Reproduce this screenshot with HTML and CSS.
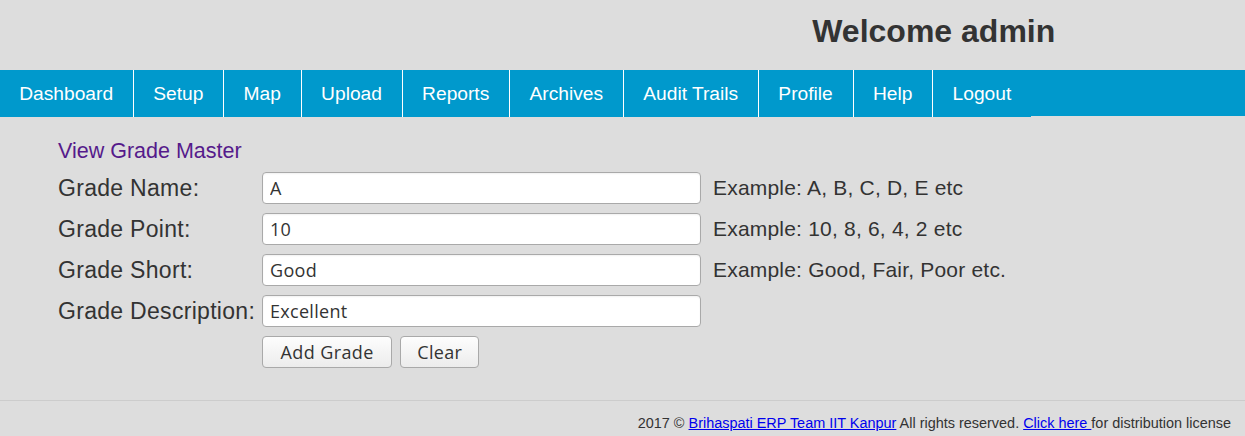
FILE: index.html
```html
<!DOCTYPE html>
<html lang="en">
<head>
<meta charset="utf-8">
<title>View Grade Master</title>
<link rel="stylesheet" href="styles.css">
</head>
<body>
<header class="top">
  <div class="top-left"></div>
  <h1 class="welcome">Welcome admin</h1>
</header>
<nav class="menu">
  <ul class="menu-list">
    <li><a href="#">Dashboard</a></li>
    <li><a href="#">Setup</a></li>
    <li><a href="#">Map</a></li>
    <li><a href="#">Upload</a></li>
    <li><a href="#">Reports</a></li>
    <li><a href="#">Archives</a></li>
    <li><a href="#">Audit Trails</a></li>
    <li><a href="#">Profile</a></li>
    <li><a href="#">Help</a></li>
    <li class="last"><a href="#">Logout</a></li>
  </ul>
</nav>
<main class="content">
  <a class="page-title" href="#">View Grade Master</a>
  <form class="grade-form">
    <label class="field-label">Grade Name:</label>
    <input class="field-input" type="text" value="A">
    <span class="hint">Example: A, B, C, D, E etc</span>

    <label class="field-label">Grade Point:</label>
    <input class="field-input" type="text" value="10">
    <span class="hint">Example: 10, 8, 6, 4, 2 etc</span>

    <label class="field-label">Grade Short:</label>
    <input class="field-input" type="text" value="Good">
    <span class="hint">Example: Good, Fair, Poor etc.</span>

    <label class="field-label">Grade Description:</label>
    <input class="field-input" type="text" value="Excellent">
    <span class="hint"></span>

    <span class="spacer"></span>
    <div class="actions">
      <button class="btn btn-add" type="button">Add Grade</button>
      <button class="btn btn-clear" type="button">Clear</button>
    </div>
  </form>
</main>
<footer class="footer">
  2017 &copy; <a href="#">Brihaspati ERP Team IIT Kanpur</a> All rights reserved. <a href="#">Click here </a>for distribution license
</footer>
</body>
</html>
```

FILE: styles.css
```css
* {
  box-sizing: border-box;
}

html, body {
  margin: 0;
  padding: 0;
  background: #dddddd;
}

body {
  font-family: "Liberation Sans", Arial, sans-serif;
  color: #333333;
}

.top {
  display: grid;
  grid-template-columns: 1fr 1fr;
  height: 70px;
}

.welcome {
  margin: 0;
  padding-top: 13px;
  font-size: 32px;
  font-weight: bold;
  text-align: center;
  color: #333333;
  line-height: normal;
}

.menu {
  background: #0099cc;
  height: 46px;
}

.menu-list {
  list-style: none;
  margin: 0;
  padding: 0;
  display: flex;
}

.menu-list li {
  height: 47px;
  background: #0099cc;
  border-right: 1px solid #ffffff;
}

.menu-list li.last {
  border-right: none;
}

.menu-list a {
  display: block;
  padding: 0 20px 0 19.2px;
  line-height: 47px;
  font-size: 19.2px;
  color: #ffffff;
  text-decoration: none;
}

.content {
  padding: 24px 0 32px 58px;
}

.page-title {
  display: block;
  font-size: 21.5px;
  line-height: 22px;
  color: #551a8b;
  text-decoration: none;
  margin-bottom: 10px;
}

.grade-form {
  display: grid;
  grid-template-columns: 192px 439px auto;
  grid-auto-rows: 32px;
  column-gap: 12px;
  row-gap: 9px;
  align-items: center;
}

.field-label {
  font-size: 23px;
  letter-spacing: 0.3px;
  white-space: nowrap;
  color: #333333;
}

.field-input {
  width: 439px;
  height: 32px;
  margin: 0;
  padding: 0 7px;
  border: 1px solid #a9a9a9;
  border-radius: 4px;
  background: #ffffff;
  box-shadow: inset 0 1px 2px rgba(0, 0, 0, 0.06);
  font-family: "Open Sans", "Noto Sans", sans-serif;
  font-size: 18px;
  letter-spacing: 0.3px;
  color: #333333;
}

.hint {
  font-size: 21px;
  letter-spacing: 0.2px;
  white-space: nowrap;
  color: #333333;
}

.actions {
  display: flex;
  gap: 8px;
  grid-column: 2 / 4;
}

.btn {
  height: 32px;
  margin: 0;
  border: 1px solid #a9a9a9;
  border-radius: 4px;
  background: linear-gradient(#fdfdfd, #ececec);
  font-family: "Open Sans", "Noto Sans", sans-serif;
  font-size: 18px;
  letter-spacing: 0.3px;
  color: #333333;
}

.btn-add {
  padding: 0 17.5px;
  letter-spacing: 0.4px;
}

.btn-clear {
  padding: 0 16px;
}

.footer {
  border-top: 1px solid #cccccc;
  padding: 14px 14px 0 0;
  text-align: right;
  font-size: 14.45px;
  color: #333333;
}

.footer a {
  color: #0000ee;
  text-decoration: underline;
}
```
